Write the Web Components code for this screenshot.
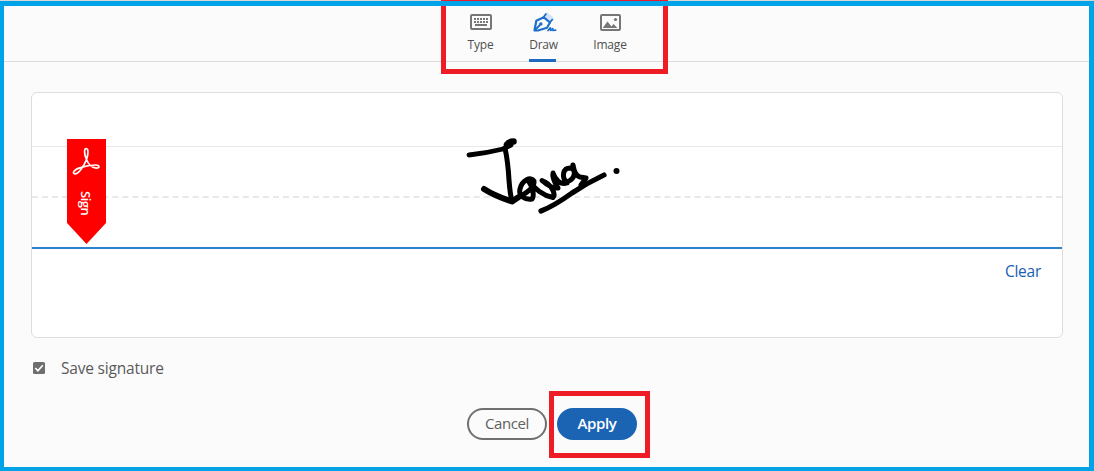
<!DOCTYPE html>
<html lang="en"><head><meta charset="utf-8"><title>Signature</title>
<style>body{margin:0;font-family:"Open Sans","Noto Sans",sans-serif}</style></head>
<body><signature-dialog></signature-dialog>
<script>
const define=(name,html)=>customElements.define(name,class extends HTMLElement{
  constructor(){super();const t=document.createElement('template');t.innerHTML=html;
    this.attachShadow({mode:'open'}).append(t.content.cloneNode(true));}
});

define('mode-tab',`<style>
:host{display:flex;flex-direction:column;align-items:center;box-sizing:border-box;height:62px;padding:12px 0 0 2px;color:#505050;font-size:12px;line-height:16px;border-bottom:3px solid transparent;white-space:nowrap}
:host([selected]){border-bottom-color:#1d6bc1}
.icon{height:21px;margin-bottom:4px}
.label{letter-spacing:var(--track,0)}
</style><div class="icon"><slot name="icon"></slot></div><span class="label"><slot></slot></span>`);

define('mode-tabs',`<style>
:host{display:grid;grid-template-columns:27px 27px 34px;column-gap:36px;justify-content:start;height:62px;border-bottom:1px solid #dcdcdc;box-sizing:border-box}
svg{display:block;overflow:visible}
</style>
<mode-tab style="--track:-.2px"><svg slot="icon" width="22" height="20" viewBox="0 0 22 20"><rect x="1" y="3" width="20" height="14" rx="1" fill="none" stroke="#767676" stroke-width="2"/><path d="M4 7h14M4 10h14" stroke="#767676" stroke-width="2" stroke-dasharray="2 1"/><path d="M5 13h12" stroke="#767676" stroke-width="2"/></svg>Type</mode-tab>
<mode-tab selected style="--track:-.25px"><svg slot="icon" width="24" height="20" viewBox="531.5 12 24 20"><path d="m543.500 16 3-4 6.500 5.500-3 4Z" fill="#d5e4f4"/><path d="m534 30.500 1.800-9.800 7.500-3.400 6.200 5.200-3 5.200-9 2.800Z" fill="none" stroke="#1d6fcb" stroke-width="2.200" stroke-linejoin="round"/><path d="m534 30.500 5.500-5.500M542.800 17.500l3-4M549.300 22.500l3-3.500" stroke="#1d6fcb" stroke-width="1.900" fill="none"/><circle cx="540.300" cy="24" r="1.800" fill="#1d6fcb"/><path d="m547.500 30.500 2.300-2.700.2 2.700 2.200-1.900.2 1.900 2.800-.4" fill="none" stroke="#1d6fcb" stroke-width="1.700" stroke-linecap="round" stroke-linejoin="round"/></svg>Draw</mode-tab>
<mode-tab style="--track:-.15px"><svg slot="icon" width="21" height="20" viewBox="0 0 21 20"><rect x="1" y="3" width="19" height="15" rx="1" fill="none" stroke="#767676" stroke-width="2"/><path d="m3 15.500 4.500-6 4 5 2-2.500 3.500 3.500V16H3Z" fill="#767676"/><circle cx="15.500" cy="7.500" r="1.600" fill="#767676"/></svg>Image</mode-tab>`);

define('sign-ribbon',`<style>
:host{display:flex;flex-direction:column;align-items:center;width:39px;height:105px;background:#f00;clip-path:polygon(0 0,100% 0,100% 84px,50% 100%,0 84px);color:#fff}
svg{margin-top:8px;flex:none}
span{writing-mode:vertical-rl;margin:14px 2px 0 0;font:600 13px/16px "Open Sans",sans-serif;letter-spacing:-.5px}
</style><svg width="29" height="30" viewBox="0 0 29 30" fill="none" stroke="#fff" stroke-width="1.700" stroke-linejoin="round"><path d="M14.500 12.500C12 7 12 1.500 14.200 1.500c2.600 0 2 6.500.1 11.500C12 19 6.500 26.800 3 26.800c-3 0-1.800-4 5.500-6.200 5-1.800 10.500-2.600 15-2.600 4.500 0 4.500 3.500.5 3.100-4-.5-7.500-3.500-9.500-8.600"/></svg><span>Sign</span>`);

define('signature-ink',`<style>:host{display:block;width:158px;height:80px}svg{display:block;overflow:visible}</style>
<svg width="158" height="80" viewBox="465 136 158 80" fill="none" stroke="#000" stroke-linecap="round" stroke-linejoin="round">
<path stroke-width="4.800" d="M469 155Q487 153 503 149L511 145"/>
<path stroke-width="6.500" d="M507 144.500Q509 141.500 513.500 141.500"/>
<path stroke-width="5" d="M505 148Q508 162 509 180Q510 194 512 201"/>
<path stroke-width="6" d="M484 189Q495 196 512 201.500L518 197.500"/>
<path stroke-width="5" d="M517 198C525 194 535 188 534 181C531 176 522 180 520 189C518 196 525 200 532 199C535 195 532 186 529 182C534 187 541 195 553 197.500C556 195 552 184 542 180.500C547 185 553 188.500 558 188C555 183 552 177 553 173C555 180 561 185 567 183C561 177 563 168 570 168C577 169 575 179 568 181.500M573 165C574 171 576 176 580 177L586 178Q584 181 581 185"/>
<path stroke-width="5.200" d="M541 211Q554 206 572 193Q587 183 604 175"/>
<circle cx="616.500" cy="171" r="3" fill="#000" stroke="none"/></svg>`);

define('signature-pad',`<style>
:host{display:grid;grid-template-rows:54px 51px 51px 1fr;position:relative;box-sizing:border-box;height:246px;margin:30px 26px 0 27px;border:1px solid #ddd;border-radius:6px;background:#fff}
.top{border-bottom:1px solid #e8e8e8}.mid{border-bottom:2px dashed #e8e8e8}.base{border-bottom:2px solid #3182ce}
.foot{display:flex;justify-content:flex-end;padding:11px 21px}
button{border:0;background:none;padding:0;height:22px;font:15.500px/22px "Open Sans",sans-serif;color:#1960b3;letter-spacing:-.25px}
sign-ribbon{position:absolute;left:35px;top:46px}
signature-ink{position:absolute;left:433px;top:43px}
</style><div class="top"></div><div class="mid"></div><div class="base"></div><div class="foot"><button>Clear</button></div><sign-ribbon></sign-ribbon><signature-ink></signature-ink>`);

define('save-option',`<style>
:host{display:flex;align-items:center;gap:16px;height:22px;margin:19px 0 0 29px;color:#5a5a5a;font-size:15.500px;line-height:22px;letter-spacing:-.2px}
svg{display:block}
</style><svg width="12" height="12"><rect width="12" height="12" rx="1.500" fill="#6e6e6e"/><path d="m2.300 6 2.600 2.800 4.900-5.500" fill="none" stroke="#fff" stroke-width="1.700"/></svg><span><slot></slot></span>`);

define('pill-button',`<style>
:host{display:block;width:80px}
button{display:block;width:80px;height:32px;border:2px solid #707070;border-radius:16px;padding:0 0 2px;background:#fbfbfb;color:#606060;font:15px/26px "Open Sans",sans-serif;letter-spacing:-.4px}
:host([primary]) button{background:#1b64b4;border-color:#1b64b4;color:#fff;font-weight:600}
</style><button><slot></slot></button>`);

define('highlight-box',`<style>:host{display:block;position:absolute;box-sizing:border-box;border:5px solid #ee1c24;pointer-events:none}</style>`);

define('signature-dialog',`<style>
:host{display:block;position:relative;box-sizing:border-box;width:1094px;height:471px;overflow:hidden;background:#fbfbfb;padding:0 5px 0 4px}
mode-tabs{padding-left:462px}
.actions{display:flex;gap:10px;margin:29px 0 0 463px}
.edge{position:absolute;inset:0 0 auto;height:1px;background:#d5d9d5}
.frame{position:absolute;inset:1px 0 0;border:solid #00a2e8;border-width:5px 5px 4px 4px;pointer-events:none}
.modes{left:441px;top:0;width:227px;height:74px}
.confirm{left:549px;top:391px;width:101px;height:67px}
</style>
<mode-tabs></mode-tabs><signature-pad></signature-pad><save-option>Save signature</save-option>
<div class="actions"><pill-button>Cancel</pill-button><pill-button primary>Apply</pill-button></div>
<div class="edge"></div><highlight-box class="modes"></highlight-box><highlight-box class="confirm"></highlight-box><div class="frame"></div>`);
</script></body></html>
